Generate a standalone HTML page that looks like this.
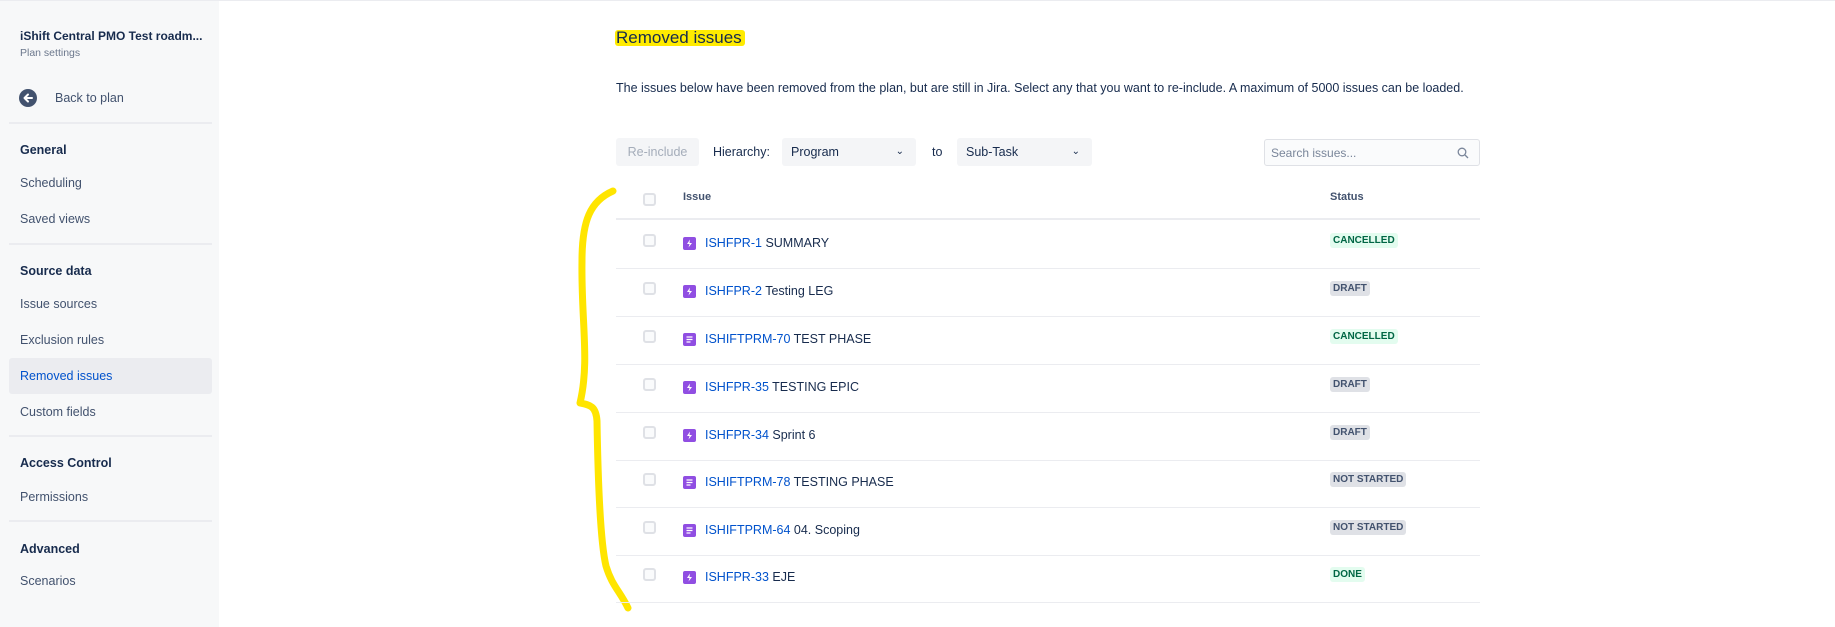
<!DOCTYPE html>
<html><head><meta charset="utf-8"><style>
*{box-sizing:border-box;margin:0;padding:0}
body{width:1835px;height:626px;overflow:hidden;background:#fff;font-family:"Liberation Sans",sans-serif;color:#172b4d;position:relative;border-top:1px solid #ebecf0}
.sb{position:absolute;left:0;top:0;width:219px;height:626px;background:#f7f8f9}
.a{position:absolute;white-space:nowrap}
.nav{position:absolute;left:20px;font-size:12.5px;color:#42526e}
.hd{position:absolute;left:20px;font-size:12.5px;font-weight:bold;color:#172b4d}
.div{position:absolute;left:9px;width:203px;height:2px;background:#ebecf0}
.btn{position:absolute;top:137px;height:28px;background:#f4f5f7;border-radius:3px;font-size:12.5px;line-height:28px}
.row{position:absolute;left:616px;width:864px;height:48px;border-bottom:1px solid #ebecf0}
.cb{position:absolute;left:27px;width:13px;height:13px;border:2px solid #dfe1e6;border-radius:3px;background:#fafbfc}
.ic{position:absolute;left:67px;width:13px;height:13px;border-radius:2px;background:#904ee2}
.key{position:absolute;left:89px;font-size:12.5px;color:#0052cc;white-space:nowrap}
.key span{color:#172b4d}
.lz{position:absolute;left:714px;height:15px;padding:0 3px;font-size:10px;font-weight:bold;line-height:15px;border-radius:3px}
.g{background:#e3fcef;color:#006644}.d{background:#dfe1e6;color:#42526e}
</style></head><body>
<div class="sb"></div>
<div class="a" style="left:20px;top:28px;font-size:12px;font-weight:bold;color:#172b4d">iShift Central PMO Test roadm...</div>
<div class="a" style="left:20px;top:46px;font-size:10.5px;color:#6b778c">Plan settings</div>
<svg class="a" style="left:19px;top:88px" width="18" height="18" viewBox="0 0 18 18"><circle cx="9" cy="9" r="9" fill="#42526e"/><path d="M13 9H6M9 5.5L5.5 9 9 12.5" stroke="#fff" stroke-width="2" fill="none" stroke-linecap="round" stroke-linejoin="round"/></svg>
<div class="nav" style="left:55px;top:90px">Back to plan</div>
<div class="div" style="top:121px"></div>
<div class="hd" style="top:142px">General</div>
<div class="nav" style="top:175px">Scheduling</div>
<div class="nav" style="top:211px">Saved views</div>
<div class="div" style="top:242px"></div>
<div class="hd" style="top:263px">Source data</div>
<div class="nav" style="top:296px">Issue sources</div>
<div class="nav" style="top:332px">Exclusion rules</div>
<div class="a" style="left:9px;top:357px;width:203px;height:36px;background:#ebecf0;border-radius:3px"></div>
<div class="nav" style="top:368px;color:#0052cc">Removed issues</div>
<div class="nav" style="top:404px">Custom fields</div>
<div class="div" style="top:434px"></div>
<div class="hd" style="top:455px">Access Control</div>
<div class="nav" style="top:489px">Permissions</div>
<div class="div" style="top:519px"></div>
<div class="hd" style="top:541px">Advanced</div>
<div class="nav" style="top:573px">Scenarios</div>

<div class="a" style="left:615px;top:29px;width:130px;height:16px;background:#ffeb00;border-radius:3px"></div>
<div class="a" style="left:616px;top:27px;font-size:17px;color:#172b4d">Removed issues</div>
<div class="a" style="left:616px;top:80px;font-size:12.5px;color:#172b4d">The issues below have been removed from the plan, but are still in Jira. Select any that you want to re-include. A maximum of 5000 issues can be loaded.</div>

<div class="btn" style="left:616px;width:83px;text-align:center;color:#a5adba">Re-include</div>
<div class="a" style="left:713px;top:144px;font-size:12.5px">Hierarchy:</div>
<div class="btn" style="left:782px;width:134px;padding-left:9px">Program<span style="position:absolute;right:12px;font-size:10px">&#8964;</span></div>
<div class="a" style="left:932px;top:144px;font-size:12.5px">to</div>
<div class="btn" style="left:957px;width:135px;padding-left:9px">Sub-Task<span style="position:absolute;right:12px;font-size:10px">&#8964;</span></div>
<div class="a" style="left:1264px;top:138px;width:216px;height:27px;border:1px solid #dfe1e6;border-radius:3px;background:#fafbfc;font-size:12px;color:#7a869a;padding:6px 6px">Search issues...
<svg style="position:absolute;right:10px;top:7px" width="12" height="12" viewBox="0 0 12 12"><circle cx="5" cy="5" r="3.8" stroke="#7a869a" stroke-width="1.3" fill="none"/><path d="M8 8l3 3" stroke="#7a869a" stroke-width="1.3"/></svg></div>

<div class="row" style="top:171px;height:48px;border-bottom:2px solid #ebecf0">
<div class="cb" style="top:21px"></div>
<div class="a" style="left:67px;top:19px;font-size:11px;font-weight:bold;color:#42526e">Issue</div>
<div class="a" style="left:714px;top:19px;font-size:11px;font-weight:bold;color:#42526e">Status</div>
</div>

<svg class="a" style="left:0;top:0" width="700" height="626"><path d="M613 190 C590 200 582 220 582 260 C581 320 590 360 580 402 C590 404 596 405 597 420 C598 480 600 540 606 565 C612 585 620 590 628 607" stroke="#ffe500" stroke-width="7" fill="none" stroke-linecap="round" stroke-linejoin="round"/></svg>

<div class="row" style="top:220px"><div class="cb" style="top:13px"></div><div class="ic" style="top:16px"><svg width="13" height="13" viewBox="0 0 13 13"><path d="M7 2.5L4 7h2.5L5.5 10.5 9 6H6.5z" fill="#fff"/></svg></div><div class="key" style="top:15px">ISHFPR-1 <span>SUMMARY</span></div><div class="lz g" style="top:12px">CANCELLED</div></div>
<div class="row" style="top:268px"><div class="cb" style="top:13px"></div><div class="ic" style="top:16px"><svg width="13" height="13" viewBox="0 0 13 13"><path d="M7 2.5L4 7h2.5L5.5 10.5 9 6H6.5z" fill="#fff"/></svg></div><div class="key" style="top:15px">ISHFPR-2 <span>Testing LEG</span></div><div class="lz d" style="top:12px">DRAFT</div></div>
<div class="row" style="top:316px"><div class="cb" style="top:13px"></div><div class="ic" style="top:16px"><svg width="13" height="13" viewBox="0 0 13 13"><path d="M3.5 4h6M3.5 6.5h6M3.5 9h4" stroke="#fff" stroke-width="1.2"/></svg></div><div class="key" style="top:15px">ISHIFTPRM-70 <span>TEST PHASE</span></div><div class="lz g" style="top:12px">CANCELLED</div></div>
<div class="row" style="top:364px"><div class="cb" style="top:13px"></div><div class="ic" style="top:16px"><svg width="13" height="13" viewBox="0 0 13 13"><path d="M7 2.5L4 7h2.5L5.5 10.5 9 6H6.5z" fill="#fff"/></svg></div><div class="key" style="top:15px">ISHFPR-35 <span>TESTING EPIC</span></div><div class="lz d" style="top:12px">DRAFT</div></div>
<div class="row" style="top:412px"><div class="cb" style="top:13px"></div><div class="ic" style="top:16px"><svg width="13" height="13" viewBox="0 0 13 13"><path d="M7 2.5L4 7h2.5L5.5 10.5 9 6H6.5z" fill="#fff"/></svg></div><div class="key" style="top:15px">ISHFPR-34 <span>Sprint 6</span></div><div class="lz d" style="top:12px">DRAFT</div></div>
<div class="row" style="top:459px"><div class="cb" style="top:13px"></div><div class="ic" style="top:16px"><svg width="13" height="13" viewBox="0 0 13 13"><path d="M3.5 4h6M3.5 6.5h6M3.5 9h4" stroke="#fff" stroke-width="1.2"/></svg></div><div class="key" style="top:15px">ISHIFTPRM-78 <span>TESTING PHASE</span></div><div class="lz d" style="top:12px">NOT STARTED</div></div>
<div class="row" style="top:507px"><div class="cb" style="top:13px"></div><div class="ic" style="top:16px"><svg width="13" height="13" viewBox="0 0 13 13"><path d="M3.5 4h6M3.5 6.5h6M3.5 9h4" stroke="#fff" stroke-width="1.2"/></svg></div><div class="key" style="top:15px">ISHIFTPRM-64 <span>04. Scoping</span></div><div class="lz d" style="top:12px">NOT STARTED</div></div>
<div class="row" style="top:554px"><div class="cb" style="top:13px"></div><div class="ic" style="top:16px"><svg width="13" height="13" viewBox="0 0 13 13"><path d="M7 2.5L4 7h2.5L5.5 10.5 9 6H6.5z" fill="#fff"/></svg></div><div class="key" style="top:15px">ISHFPR-33 <span>EJE</span></div><div class="lz g" style="top:12px">DONE</div></div>
</body></html>
